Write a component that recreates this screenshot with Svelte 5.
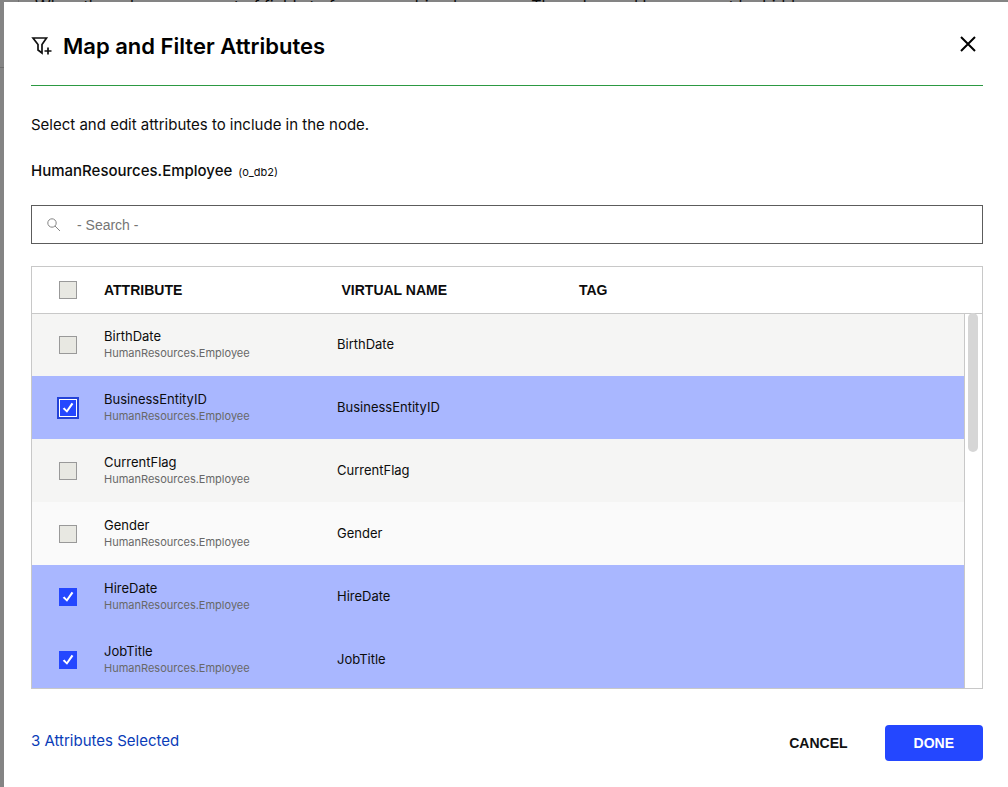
<script lang="ts">
	const source = 'HumanResources.Employee';

	let attributes = $state([
		{ name: 'BirthDate', selected: false },
		{ name: 'BusinessEntityID', selected: true },
		{ name: 'CurrentFlag', selected: false },
		{ name: 'Gender', selected: false },
		{ name: 'HireDate', selected: true },
		{ name: 'JobTitle', selected: true }
	]);
	let search = $state('');

	const count = $derived(attributes.filter((a) => a.selected).length);

	function toggleAll(e: Event) {
		const checked = (e.currentTarget as HTMLInputElement).checked;
		attributes.forEach((a) => (a.selected = checked));
	}
</script>

<div class="page">
	<div class="backdrop" aria-hidden="true">
		<p>When the values map a set of fields to form a combined process. The value and key may not be hidden</p>
	</div>

	<div class="modal" role="dialog" aria-labelledby="title">
		<header>
			<svg class="filter" width="22" height="20" viewBox="0 0 22 20" aria-hidden="true">
				<path d="M2 2h13.500l-4.500 6.500v8.500l-4-3V8.500z" />
				<path d="M17 11.500v7M13.500 15h7" />
			</svg>
			<h1 id="title">Map and Filter Attributes</h1>
			<button class="close" aria-label="Close">
				<svg width="16" height="16" viewBox="0 0 16 16"><path d="M1 1l14 14M15 1L1 15" /></svg>
			</button>
		</header>

		<p class="intro">Select and edit attributes to include in the node.</p>
		<h2>{source} <small>(o_db2)</small></h2>

		<label class="search">
			<svg width="14" height="14" viewBox="0 0 14 14" aria-hidden="true">
				<circle cx="5" cy="5" r="4.200" />
				<path d="M8 8l5 5" />
			</svg>
			<input type="text" placeholder="- Search -" aria-label="Search" bind:value={search} />
		</label>

		<div class="frame">
			<table>
				<thead>
					<tr>
						<th class="check">
							<input
								type="checkbox"
								aria-label="Select all"
								checked={count === attributes.length}
								onchange={toggleAll}
							/>
						</th>
						<th>ATTRIBUTE</th>
						<th>VIRTUAL NAME</th>
						<th>TAG</th>
					</tr>
				</thead>
				<tbody>
					{#each attributes as attribute, i (attribute.name)}
						<tr class:selected={attribute.selected}>
							<td class="check">
								<input
									type="checkbox"
									id={attribute.name}
									class:focused={i === 1}
									bind:checked={attribute.selected}
								/>
							</td>
							<td>
								<label for={attribute.name}>{attribute.name}</label>
								<span class="source">{source}</span>
							</td>
							<td>{attribute.name}</td>
							<td></td>
						</tr>
					{/each}
				</tbody>
			</table>
			<div class="track"><div class="thumb"></div></div>
		</div>

		<footer>
			<span class="count">{count} Attributes Selected</span>
			<button class="cancel">CANCEL</button>
			<button class="done">DONE</button>
		</footer>
	</div>
</div>

<style>
	:global(body) {
		margin: 0;
		background: #848484;
	}

	.page {
		position: relative;
		min-height: 100vh;
		overflow: hidden;
		box-sizing: border-box;
		padding: 2px 0 0 4px;
		font-family: Inter, 'Liberation Sans', sans-serif;
		font-size: 13px;
		color: #0c0c0c;
	}

	/* the page under the dialog */
	.backdrop {
		position: absolute;
		inset: 0;
		padding-left: 18px;
		background: linear-gradient(#6d6d6d, #6d6d6d) 0 67px / 4px 1px no-repeat;
	}

	.backdrop p {
		margin: 0;
		padding-left: 16px;
		border-left: 1px solid #707070;
		font-size: 16px;
		line-height: 12px;
		white-space: nowrap;
	}

	.modal {
		position: relative;
		box-sizing: border-box;
		min-height: calc(100vh - 2px);
		padding: 0 25px 26px 27px;
		background: #fff;
	}

	header {
		display: flex;
		align-items: center;
		height: 83px;
		border-bottom: 1px solid #2c9942;
	}

	svg {
		fill: none;
		stroke: #111;
		flex: none;
	}

	.filter {
		margin: 5px 10px 0 0;
		stroke-width: 1.7;
	}

	h1 {
		flex: 1;
		margin: 4px 0 0;
		font-size: 22px;
		line-height: 28px;
		font-weight: 600;
		color: #000;
	}

	button {
		border: 0;
		background: none;
		font: 600 14px/20px 'Liberation Sans', Arial, sans-serif;
		cursor: pointer;
	}

	.close {
		display: flex;
		padding: 7px;
	}

	.close svg {
		stroke: #000;
		stroke-width: 2;
	}

	.intro {
		margin: 28px 0 0;
		font-size: 15px;
		line-height: 22px;
	}

	h2 {
		margin: 24px 0 0;
		font-size: 15px;
		line-height: 22px;
		font-weight: 500;
	}

	small {
		margin-left: 2px;
		font-size: 11px;
		font-weight: 400;
	}

	.search {
		display: flex;
		align-items: center;
		gap: 16px;
		margin-top: 22px;
		padding: 0 15px;
		height: 37px;
		border: 1px solid #5c5c5c;
	}

	.search svg {
		stroke: #858585;
	}

	.search input {
		flex: 1;
		min-width: 0;
		padding: 0;
		border: 0;
		outline: 0;
		background: none;
		font: 14px/20px 'Liberation Sans', Arial, sans-serif;
	}

	.search input::placeholder {
		color: #757575;
	}

	.frame {
		position: relative;
		margin-top: 22px;
		border: 1px solid #c8c8c8;
	}

	table,
	thead,
	tbody {
		display: block;
	}

	tr {
		display: grid;
		grid-template-columns: 72px 25% 25% 1fr;
		align-items: center;
	}

	thead {
		position: relative;
		z-index: 1;
		margin-bottom: -1px;
		border-bottom: 1px solid #c8c8c8;
	}

	thead tr {
		height: 46px;
	}

	th,
	td {
		padding: 0;
		text-align: left;
	}

	th {
		font: 600 14px/20px 'Liberation Sans', Arial, sans-serif;
	}

	tbody {
		max-height: 375px;
		margin-right: 17px;
		border-right: 1px solid #c8c8c8;
		overflow: hidden;
	}

	tbody tr {
		height: 63px;
		background: #f5f5f4;
		font-size: 13px;
		line-height: 17px;
	}

	tbody tr:nth-child(even) {
		background: #fafafa;
	}

	tbody tr.selected {
		background: #a9b7ff;
	}

	td label {
		display: block;
	}

	.source {
		display: block;
		font-size: 11px;
		color: #686868;
	}

	.check {
		display: flex;
		padding-left: 27px;
	}

	.check input {
		appearance: none;
		box-sizing: border-box;
		width: 18px;
		height: 18px;
		margin: 0;
		border: 1px solid #999;
		background: #e8e8e2;
	}

	.check input:checked {
		display: grid;
		place-items: center;
		border-color: #2447ff;
		background: #2447ff;
	}

	.check input:checked::before {
		content: '';
		width: 12px;
		height: 12px;
		background: #fff;
		clip-path: polygon(6% 61%, 20% 50%, 39% 71%, 80% 10%, 95% 20%, 42% 94%);
	}

	.check input.focused {
		border-color: #fff;
		outline: 2px solid #2342d8;
	}

	.track {
		position: absolute;
		top: 46px;
		right: 0;
		bottom: 0;
		width: 17px;
		z-index: 2;
	}

	.thumb {
		width: 10px;
		height: 37%;
		margin-left: 3px;
		border-radius: 5px;
		background: #d6d6d6;
	}

	footer {
		display: flex;
		align-items: center;
		margin-top: 36px;
	}

	.count {
		flex: 1;
		margin-bottom: 4px;
		font-size: 15px;
		line-height: 22px;
		color: #0a3cb8;
	}

	.cancel {
		margin-right: 8px;
		padding: 8px 29px;
		color: #111;
	}

	.done {
		padding: 8px 29px;
		border-radius: 4px;
		background: #2447ff;
		color: #fff;
	}
</style>
